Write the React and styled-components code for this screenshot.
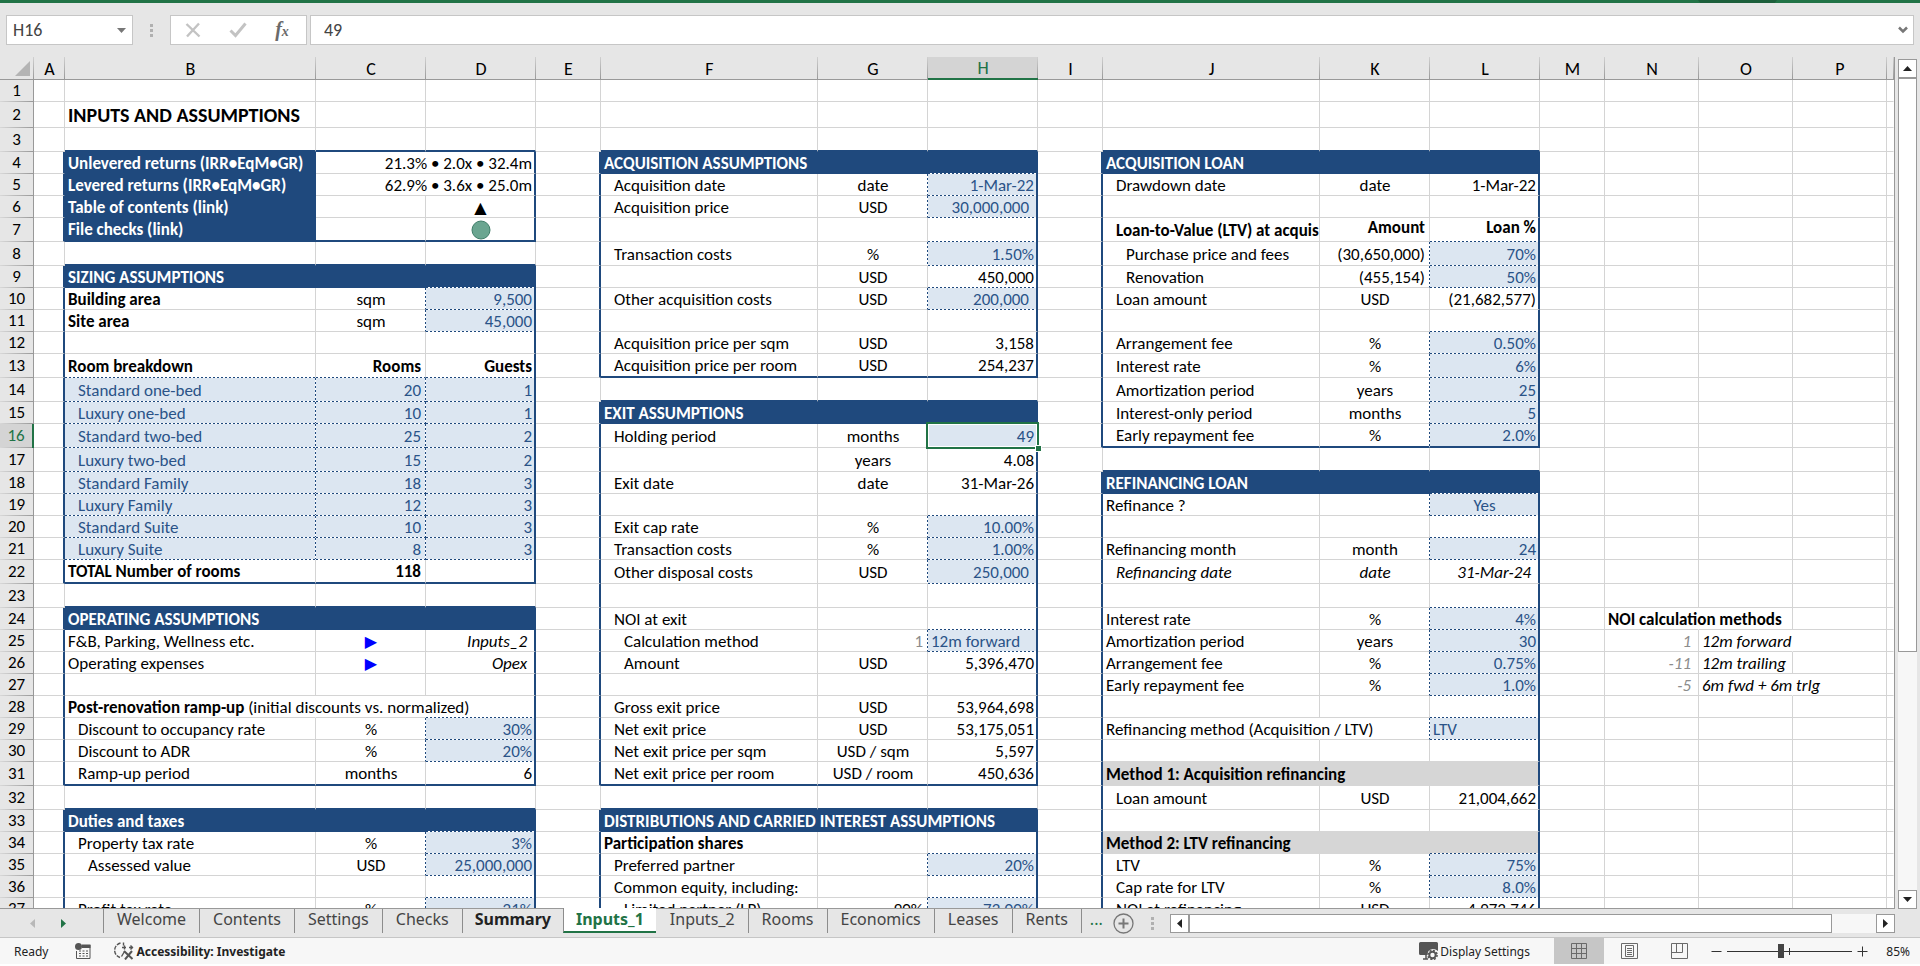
import React, { useState } from 'react'
import styled, { createGlobalStyle, css } from 'styled-components'

const NAVY = '#1f497d'
const GREEN = '#217346'
const GRID = '#d4d4d4'
const LINE = '#999'
const FILL = '#dce6f1'
const BAND = '#d6d6d6'
const CHROME = '#e6e6e6'

const GlobalStyle = createGlobalStyle`
  * {
    box-sizing: border-box;
  }
  body {
    margin: 0;
    background: white;
    font-family: Carlito, Calibri, Lato, sans-serif;
    font-size: 17px;
    color: black;
  }
  button,
  input {
    font: inherit;
    color: inherit;
    margin: 0;
    padding: 0;
    border: none;
    border-radius: 0;
    background: none;
    outline: none;
  }
`

/* ---------- sheet data ---------- */

const COLUMNS = [
  ['A', 31],
  ['B', 251],
  ['C', 110],
  ['D', 110],
  ['E', 65],
  ['F', 217],
  ['G', 110],
  ['H', 110],
  ['I', 65],
  ['J', 217],
  ['K', 110],
  ['L', 110],
  ['M', 65],
  ['N', 94],
  ['O', 94],
  ['P', 94],
  ['', null],
]

const TALL_ROWS = [3, 7, 8, 13, 14, 16, 17, 22, 23, 31, 32]
const ROW_COUNT = 37

// first column, first row, last column, last row
const PANELS = [
  ['B', 4, 'D', 7],
  ['B', 9, 'D', 22],
  ['B', 24, 'D', 31],
  ['B', 33, 'D', 40],
  ['F', 4, 'H', 13],
  ['F', 15, 'H', 31],
  ['F', 33, 'H', 40],
  ['J', 4, 'L', 16],
  ['J', 18, 'L', 40],
]

const BANDS = [31, 34]

const label = (text, indent = 0, more) => ({ text, indent, ...more })
const bold = (text, indent = 0) => ({ text, indent, bold: true })
const title = text => ({ text, bold: true })
const unit = text => ({ text, align: 'center' })
const num = (text, more) => ({ text, align: 'right', ...more })
const input = (text, more) => ({ text, align: 'right', input: true, ...more })

const CELLS = {
  B2: { text: 'INPUTS AND ASSUMPTIONS', bold: true, large: true },

  B4: title('Unlevered returns (IRR•EqM•GR)'),
  C4: num('21.3% • 2.0x • 32.4m', { span: 2 }),
  B5: title('Levered returns (IRR•EqM•GR)'),
  C5: num('62.9% • 3.6x • 25.0m', { span: 2 }),
  B6: title('Table of contents (link)'),
  D6: { align: 'center', mark: 'up' },
  B7: title('File checks (link)'),
  D7: { align: 'center', mark: 'ok' },

  B9: title('SIZING ASSUMPTIONS'),
  B10: bold('Building area'),
  C10: unit('sqm'),
  D10: input('9,500'),
  B11: bold('Site area'),
  C11: unit('sqm'),
  D11: input('45,000'),
  B13: bold('Room breakdown'),
  C13: num('Rooms', { bold: true }),
  D13: num('Guests', { bold: true }),
  B22: bold('TOTAL Number of rooms'),
  C22: num('118', { bold: true }),

  B24: title('OPERATING ASSUMPTIONS'),
  B25: label('F&B, Parking, Wellness etc.'),
  C25: { align: 'center', mark: 'next' },
  D25: num('Inputs_2', { italic: true, inset: true }),
  B26: label('Operating expenses'),
  C26: { align: 'center', mark: 'next' },
  D26: num('Opex', { italic: true, inset: true }),
  B28: {
    text: (
      <>
        <b>Post-renovation ramp-up</b> (initial discounts vs. normalized)
      </>
    ),
    spill: true,
  },
  C28: { spill: true },
  B29: label('Discount to occupancy rate', 1),
  C29: unit('%'),
  D29: input('30%'),
  B30: label('Discount to ADR', 1),
  C30: unit('%'),
  D30: input('20%'),
  B31: label('Ramp-up period', 1),
  C31: unit('months'),
  D31: num('6'),

  B33: title('Duties and taxes'),
  B34: label('Property tax rate', 1),
  C34: unit('%'),
  D34: input('3%'),
  B35: label('Assessed value', 2),
  C35: unit('USD'),
  D35: input('25,000,000'),
  B37: label('Profit tax rate', 1),
  C37: unit('%'),
  D37: input('21%'),

  F4: title('ACQUISITION ASSUMPTIONS'),
  F5: label('Acquisition date', 1),
  G5: unit('date'),
  H5: input('1-Mar-22'),
  F6: label('Acquisition price', 1),
  G6: unit('USD'),
  H6: input('30,000,000', { inset: true }),
  F8: label('Transaction costs', 1),
  G8: unit('%'),
  H8: input('1.50%'),
  G9: unit('USD'),
  H9: num('450,000'),
  F10: label('Other acquisition costs', 1),
  G10: unit('USD'),
  H10: input('200,000', { inset: true }),
  F12: label('Acquisition price per sqm', 1),
  G12: unit('USD'),
  H12: num('3,158'),
  F13: label('Acquisition price per room', 1),
  G13: unit('USD'),
  H13: num('254,237'),

  F15: title('EXIT ASSUMPTIONS'),
  F16: label('Holding period', 1),
  G16: unit('months'),
  H16: input('49', { selected: true }),
  G17: unit('years'),
  H17: num('4.08'),
  F18: label('Exit date', 1),
  G18: unit('date'),
  H18: num('31-Mar-26'),
  F20: label('Exit cap rate', 1),
  G20: unit('%'),
  H20: input('10.00%'),
  F21: label('Transaction costs', 1),
  G21: unit('%'),
  H21: input('1.00%'),
  F22: label('Other disposal costs', 1),
  G22: unit('USD'),
  H22: input('250,000', { inset: true }),
  F24: label('NOI at exit', 1),
  F25: label('Calculation method', 2),
  G25: num('1', { muted: true }),
  H25: input('12m forward', { align: 'left' }),
  F26: label('Amount', 2),
  G26: unit('USD'),
  H26: num('5,396,470'),
  F28: label('Gross exit price', 1),
  G28: unit('USD'),
  H28: num('53,964,698'),
  F29: label('Net exit price', 1),
  G29: unit('USD'),
  H29: num('53,175,051'),
  F30: label('Net exit price per sqm', 1),
  G30: unit('USD / sqm'),
  H30: num('5,597'),
  F31: label('Net exit price per room', 1),
  G31: unit('USD / room'),
  H31: num('450,636'),

  F33: title('DISTRIBUTIONS AND CARRIED INTEREST ASSUMPTIONS'),
  F34: bold('Participation shares'),
  F35: label('Preferred partner', 1),
  H35: input('20%'),
  F36: label('Common equity, including:', 1),
  F37: label('Limited partner (LP)', 2),
  G37: num('90%'),
  H37: input('72.00%'),

  J4: title('ACQUISITION LOAN'),
  J5: label('Drawdown date', 1),
  K5: unit('date'),
  L5: num('1-Mar-22'),
  J7: bold('Loan-to-Value (LTV) at acquis', 1),
  K7: num('Amount', { bold: true, top: true }),
  L7: num('Loan %', { bold: true, top: true }),
  J8: label('Purchase price and fees', 2),
  K8: num('(30,650,000)'),
  L8: input('70%'),
  J9: label('Renovation', 2),
  K9: num('(455,154)'),
  L9: input('50%'),
  J10: label('Loan amount', 1),
  K10: unit('USD'),
  L10: num('(21,682,577)'),
  J12: label('Arrangement fee', 1),
  K12: unit('%'),
  L12: input('0.50%'),
  J13: label('Interest rate', 1),
  K13: unit('%'),
  L13: input('6%'),
  J14: label('Amortization period', 1),
  K14: unit('years'),
  L14: input('25'),
  J15: label('Interest-only period', 1),
  K15: unit('months'),
  L15: input('5'),
  J16: label('Early repayment fee', 1),
  K16: unit('%'),
  L16: input('2.0%'),

  J18: title('REFINANCING LOAN'),
  J19: label('Refinance ?'),
  L19: input('Yes', { align: 'center' }),
  J21: label('Refinancing month'),
  K21: unit('month'),
  L21: input('24'),
  J22: label('Refinancing date', 1, { italic: true }),
  K22: { text: 'date', align: 'center', italic: true },
  L22: num('31-Mar-24', { italic: true, inset: true }),
  J24: label('Interest rate'),
  K24: unit('%'),
  L24: input('4%'),
  J25: label('Amortization period'),
  K25: unit('years'),
  L25: input('30'),
  J26: label('Arrangement fee'),
  K26: unit('%'),
  L26: input('0.75%'),
  J27: label('Early repayment fee'),
  K27: unit('%'),
  L27: input('1.0%'),
  J29: label('Refinancing method (Acquisition / LTV)', 0, { spill: true }),
  L29: input('LTV', { align: 'left' }),
  J31: bold('Method 1: Acquisition refinancing'),
  J32: label('Loan amount', 1),
  K32: unit('USD'),
  L32: num('21,004,662'),
  J34: bold('Method 2: LTV refinancing'),
  J35: label('LTV', 1),
  K35: unit('%'),
  L35: input('75%'),
  J36: label('Cap rate for LTV', 1),
  K36: unit('%'),
  L36: input('8.0%'),
  J37: label('NOI at refinancing', 1),
  K37: unit('USD'),
  L37: num('4,973,746'),

  N24: { text: 'NOI calculation methods', bold: true, spill: true },
  N25: num('1', { italic: true, muted: true, inset: true }),
  O25: label('12m forward', 0, { italic: true, spill: true }),
  N26: num('-11', { italic: true, muted: true, inset: true }),
  O26: label('12m trailing', 0, { italic: true }),
  N27: num('-5', { italic: true, muted: true, inset: true }),
  O27: label('6m fwd + 6m trlg', 0, { italic: true, spill: true }),
}

const ROOMS = [
  ['Standard one-bed', 20, 1],
  ['Luxury one-bed', 10, 1],
  ['Standard two-bed', 25, 2],
  ['Luxury two-bed', 15, 2],
  ['Standard Family', 18, 3],
  ['Luxury Family', 12, 3],
  ['Standard Suite', 10, 3],
  ['Luxury Suite', 8, 3],
]

ROOMS.forEach(([name, rooms, guests], i) => {
  CELLS[`B${14 + i}`] = input(name, { align: 'left', indent: 1 })
  CELLS[`C${14 + i}`] = input(rooms)
  CELLS[`D${14 + i}`] = input(guests)
})

const TABS = ['Welcome', 'Contents', 'Settings', 'Checks', 'Summary', 'Inputs_1', 'Inputs_2', 'Rooms', 'Economics', 'Leases', 'Rents']

/* ---------- border rules ---------- */

const letter = i => (COLUMNS[i] ? COLUMNS[i][0] : '')
const cellAt = (i, row) => CELLS[`${letter(i)}${row}`] || {}
const inPanel = (i, row) =>
  PANELS.find(([c0, r0, c1, r1]) => letter(i) && letter(i) >= c0 && letter(i) <= c1 && row >= r0 && row <= r1)

const background = (i, row) => {
  const panel = inPanel(i, row)
  if (!panel) return 'transparent'
  if (panel[1] === row && (row !== 4 || panel[0] !== 'B')) return NAVY
  if (panel[0] === 'B' && panel[1] === 4 && letter(i) === 'B') return NAVY
  if (panel[0] === 'J' && BANDS.includes(row)) return BAND
  if (cellAt(i, row).input) return FILL
  return 'transparent'
}

const edge = (i, row, j, nextRow) => {
  const here = inPanel(i, row)
  const there = inPanel(j, nextRow)
  const from = background(i, row)
  const to = background(j, nextRow)
  if (here !== there) return 'thick'
  if (cellAt(i, row).input || cellAt(j, nextRow).input) return 'dash'
  if (from === NAVY) return 'navy'
  if (from === BAND || to === BAND) return 'band'
  return 'grid'
}

/* ---------- sheet parts ---------- */

const Page = styled.div`
  height: 100vh;
  display: flex;
  flex-direction: column;
  overflow: hidden;
  background: ${CHROME};
`

const TitleStrip = styled.div`
  flex: none;
  height: 3px;
  padding-right: 143px;
  display: flex;
  justify-content: flex-end;
  background: ${GREEN};
`

const TitleShade = styled.div`
  width: 79px;
  background: #1c5f3b;
  clip-path: polygon(0 0, 100% 0, 97% 100%, 3% 100%);
`

const FormulaBar = styled.div`
  flex: none;
  display: flex;
  align-items: center;
  padding: 12px 6px;
  color: #444;
  font-size: 18px;
`

const BarBox = styled.div`
  display: flex;
  align-items: center;
  height: 30px;
  border: 1px solid #c6c6c6;
  background: white;
`

const NameBox = styled(BarBox)`
  width: 127px;
  padding: 0 6px;

  input {
    flex: 1;
    min-width: 0;
  }
`

const Grip = styled.div`
  width: 3px;
  height: 13px;
  margin: ${props => props.$margin};
  background: repeating-linear-gradient(#b0b0b0 0 3px, transparent 3px 5px);
`

const FormulaButtons = styled(BarBox)`
  width: 137px;
  padding: 0 8px 0 6px;
  justify-content: space-between;
`

const BarButton = styled.button`
  display: flex;
  align-items: center;
  justify-content: center;
  width: 32px;
  height: 24px;
`

const FormulaBox = styled(BarBox)`
  flex: 1;
  margin-left: 3px;
  padding: 0 5px 0 13px;

  input {
    flex: 1;
  }
`

const Main = styled.main`
  flex: 1;
  min-height: 0;
  display: flex;
`

const SheetView = styled.div`
  flex: 1;
  min-width: 0;
  overflow: hidden;
  border-bottom: 1px solid ${LINE};
`

const Sheet = styled.table`
  width: 100%;
  table-layout: fixed;
  border-collapse: separate;
  border-spacing: 0;
  background: white;
  border-right: 1px solid ${LINE};
  line-height: 20px;
`

const ColumnHead = styled.th`
  height: 23px;
  padding: 1px 0 0;
  font-size: 18px;
  font-weight: 400;
  background: linear-gradient(#d0d0d0, ${LINE}) right / 1px 100% no-repeat ${CHROME};
  border-bottom: 1px solid ${LINE};

  ${props =>
    props.$active &&
    css`
      color: ${GREEN};
      background-color: #d4d4d4;
      border-bottom: 2px solid ${GREEN};
    `}

  svg {
    display: block;
    margin-left: 15px;
  }
`

const RowHead = styled.th`
  padding: 0;
  font-weight: 400;
  text-align: center;
  background: linear-gradient(90deg, #d8d8d8, ${LINE}) bottom / 100% 1px no-repeat ${CHROME};
  border-right: 1px solid ${LINE};

  ${props =>
    props.$active &&
    css`
      color: ${GREEN};
      background-color: #d4d4d4;
      border-right: 2px solid ${GREEN};
    `}
`

const Row = styled.tr`
  height: ${props => props.$height}px;
`

const EDGE = {
  grid: `1px solid ${GRID}`,
  thick: `2px solid ${NAVY}`,
  navy: `1px solid ${NAVY}`,
  band: `1px solid ${BAND}`,
  dash: '1px solid transparent',
  none: '1px solid transparent',
}

const dashes = (right, bottom) => {
  const layers = []
  if (bottom === 'dash') layers.push(`repeating-linear-gradient(90deg, ${NAVY} 0 2px, white 2px 4px) bottom / 100% 1px no-repeat border-box`)
  if (right === 'dash') layers.push(`repeating-linear-gradient(${NAVY} 0 2px, white 2px 4px) right / 1px 100% no-repeat border-box`)
  return layers.map(layer => `${layer}, `).join('')
}

const rightPadding = props => {
  if (props.$inset) return 7
  return props.$right === 'thick' || props.$align === 'center' ? 2 : 4
}

const Cell = styled.td`
  padding: ${props => (props.$top ? 0 : 1)}px ${rightPadding}px 0 ${props => 3 + 10 * props.$indent}px;
  vertical-align: ${props => (props.$top ? 'top' : 'middle')};
  white-space: nowrap;
  line-height: 19px;
  text-align: ${props => props.$align || 'left'};
  font-weight: ${props => (props.$bold ? 700 : 400)};
  font-style: ${props => (props.$italic ? 'italic' : 'normal')};
  font-size: ${props => (props.$large ? 20 : 17)}px;
  color: ${props => props.$color};
  border-right: ${props => EDGE[props.$right]};
  border-bottom: ${props => EDGE[props.$bottom]};
  background: ${props => dashes(props.$right, props.$bottom)} linear-gradient(${props => props.$fill}, ${props => props.$fill}) border-box;

  ${props =>
    props.$selected &&
    css`
      position: relative;
    `}
`

const Selection = styled.span`
  position: absolute;
  top: -2px;
  right: -3px;
  bottom: -2px;
  left: -2px;
  border: 2px solid ${GREEN};
  box-shadow: inset 0 0 0 1px white;

  &::after {
    content: '';
    position: absolute;
    right: -4px;
    bottom: -4px;
    width: 5px;
    height: 5px;
    background: ${GREEN};
    box-shadow: 0 0 0 1px white;
  }
`

const MarkLink = styled.a`
  display: block;
  font-family: 'DejaVu Sans', sans-serif;
  font-size: 16px;
  text-decoration: none;
  color: ${props => (props.$blue ? '#00f' : 'black')};

  svg {
    display: block;
    margin: 0 auto;
  }
`

/* ---------- scroll bars ---------- */

const VerticalScroll = styled.div`
  flex: none;
  display: flex;
  flex-direction: column;
  width: 19px;
  margin: 2px 3px 0;
  background: #f7f7f7;
`

const HorizontalScroll = styled.div`
  flex: 1;
  display: flex;
  height: 19px;
  margin-right: 25px;
  background: #f7f7f7;
`

const ScrollButton = styled.button`
  flex: none;
  display: flex;
  align-items: center;
  justify-content: center;
  width: 19px;
  height: 19px;
  border: 1px solid ${LINE};
  background: white;
`

const Thumb = styled.div`
  flex: ${props => props.$share};
  border: 1px solid ${LINE};
  background: white;
`

const Rest = styled.div`
  flex: ${props => props.$share};
`

/* ---------- tabs and status ---------- */

const TabBar = styled.nav`
  flex: none;
  display: flex;
  height: 29px;
  border-bottom: 1px solid #c6c6c6;
  font-family: 'Noto Sans', 'Open Sans', sans-serif;
  font-size: 16px;
  color: #444;
`

const TabArrows = styled.div`
  display: flex;
  align-items: center;
  gap: 22px;
  width: 103px;
  padding-left: 28px;

  button {
    display: flex;
  }
`

const Tab = styled.button`
  height: 24px;
  padding: 0 13px 4px;
  border-left: 1px solid ${props => (props.$plain ? 'transparent' : '#8c8c8c')};
  line-height: 20px;
  color: #444;

  ${props =>
    props.$strong &&
    css`
      padding: 0 12px 4px;
      font-weight: 700;
      color: #222;
    `}

  ${props =>
    props.$active &&
    css`
      height: 25px;
      margin-top: -1px;
      padding: 1px 12px 2px;
      font-weight: 700;
      color: ${GREEN};
      background: white;
      border-bottom: 2px solid ${GREEN};
    `}
`

const MoreTabs = styled.button`
  height: 24px;
  padding: 0 10px 4px 8px;
  border-left: 1px solid #8c8c8c;
  line-height: 20px;
  color: ${GREEN};
`

const TabTools = styled.div`
  flex: 1;
  display: flex;
  align-items: center;
`

const AddSheet = styled.button`
  display: flex;
`

const StatusBar = styled.footer`
  flex: none;
  display: flex;
  align-items: center;
  height: 26px;
  margin-bottom: 2px;
  padding: 0 10px 0 14px;
  background: #f7f7f7;
  box-shadow: 0 2px 0 white;
  font-family: 'Noto Sans', 'Open Sans', sans-serif;
  font-size: 12px;
  color: #222;
`

const StatusButton = styled.button`
  display: flex;
  align-items: center;
  gap: 2px;
  margin-left: ${props => props.$gap || 0}px;
  font-weight: ${props => (props.$strong ? 700 : 400)};
`

const Spacer = styled.div`
  flex: 1;
`

const ViewButtons = styled.div`
  display: flex;
  margin: 0 2px 0 24px;
`

const ViewButton = styled.button`
  display: flex;
  align-items: center;
  justify-content: center;
  width: 50px;
  height: 26px;
  background: ${props => (props.$active ? '#c6c6c6' : 'none')};
`

const ZoomButton = styled.button`
  display: flex;
  margin: 0 5px;
`

const ZoomSlider = styled.input`
  appearance: none;
  width: 125px;
  height: 14px;
  background:
    linear-gradient(#333, #333) center / 1px 7px no-repeat,
    linear-gradient(#333, #333) center / 100% 1px no-repeat;

  &::-webkit-slider-thumb {
    appearance: none;
    width: 6px;
    height: 14px;
    background: #444;
  }
`

const ZoomLevel = styled.output`
  width: 37px;
  text-align: right;
`

/* ---------- icons ---------- */

const Arrow = ({ dir, color = '#222', size = 9 }) => {
  const shapes = {
    up: 'M0 7 4.5 2 9 7z',
    down: 'M0 2 4.5 7 9 2z',
    left: 'M7 0 2 4.5 7 9z',
    right: 'M2 0 7 4.5 2 9z',
  }
  return (
    <svg width={size} height={size} viewBox="0 0 9 9">
      <path d={shapes[dir]} fill={color} />
    </svg>
  )
}

const CancelIcon = () => (
  <svg width="16" height="16" viewBox="0 0 16 16">
    <path d="M1.5 2 14.5 14.5M14 1.5 2 14.5" stroke="#c3c3c3" strokeWidth="2.4" fill="none" />
  </svg>
)

const EnterIcon = () => (
  <svg width="18" height="16" viewBox="0 0 18 16">
    <path d="M1.5 8.5 6.5 13.5 16.5 1.5" stroke="#c3c3c3" strokeWidth="3" fill="none" />
  </svg>
)

const FxLabel = styled.span`
  font-family: 'Liberation Serif', serif;
  font-style: italic;
  font-weight: 700;
  font-size: 20px;
  line-height: 20px;
  color: #6a6a6a;

  small {
    font-size: 14px;
  }
`

const RecordIcon = () => (
  <svg width="16" height="16" viewBox="0 0 16 16">
    <path d="M1.5 8v7.5h13.5V2" fill="none" stroke="#555" />
    <path d="M7 1.5h8.5V5H7z" fill="#555" />
    <circle cx="3.5" cy="3.5" r="3.5" fill="#555" />
    <path d="M4 8h10M4 10.5h10M4 13h10" stroke="#555" strokeDasharray="2 1.5" />
  </svg>
)

const AccessibilityIcon = () => (
  <svg width="20" height="18" viewBox="0 0 20 18" fill="none" stroke="#555" strokeWidth="1.4">
    <path d="M6.5 1A7.5 7.5 0 0 0 6 15.5" strokeDasharray="4 1.2" />
    <path d="M8 5.5h4M15 5.5h4M10.5 3.5v4M16.5 3.5l2 2-2 2M9.5.5v3" />
    <path d="M7.5 14.5 10.5 9.5" />
    <path d="M10 9l8.5 8M18 9l-7 8.5" strokeWidth="2" />
  </svg>
)

const DisplayIcon = () => (
  <svg width="19" height="18" viewBox="0 0 19 18">
    <path d="M0 1.5Q0 0 1.5 0h16Q19 0 19 1.5V9Q14 5 9.5 9L8 13H1.5Q0 13 0 11.5z" fill="#555" />
    <path d="M4 17h5M7 13v4" stroke="#555" strokeWidth="1.5" />
    <circle cx="13.5" cy="13" r="3.2" fill="none" stroke="#555" strokeWidth="2" />
    <circle cx="13.5" cy="13" r="4.6" fill="none" stroke="#555" strokeWidth="1.5" strokeDasharray="2 1.6" />
  </svg>
)

const GridIcon = () => (
  <svg width="16" height="16" viewBox="0 0 16 16" fill="none" stroke="#6a6a6a">
    <path d="M.5.5h15v15H.5zM.5 5.5h15M.5 10.5h15M5.5.5v15M10.5.5v15" />
  </svg>
)

const PageIcon = () => (
  <svg width="17" height="16" viewBox="0 0 17 16" fill="none" stroke="#6a6a6a">
    <path d="M.5.5h16v15H.5zM4.5 2.5h8v11h-8zM6 5.5h5M6 7.5h5M6 9.5h5M6 11.5h5" />
  </svg>
)

const BreakIcon = () => (
  <svg width="17" height="16" viewBox="0 0 17 16" fill="none" stroke="#6a6a6a">
    <path d="M.5.5h16v15H.5zM5.5.5v9M11.5.5v9H.5" />
  </svg>
)

const marks = {
  up: (
    <MarkLink href="#contents" aria-label="Table of contents">
      ▲
    </MarkLink>
  ),
  next: (
    <MarkLink href="#sheet" aria-label="Open sheet" $blue>
      ▶
    </MarkLink>
  ),
  ok: (
    <MarkLink href="#checks" aria-label="File checks">
      <svg width="20" height="20" viewBox="0 0 20 20">
        <circle cx="10" cy="10" r="9" fill="#6aa590" stroke="#3f7d68" />
      </svg>
    </MarkLink>
  ),
}

const SheetCell = ({ index, row }) => {
  const cell = cellAt(index, row)
  const last = index + (cell.span || 1) - 1
  const fill = background(index, row)
  let right = edge(last, row, last + 1, row)
  if (cell.spill && right === 'grid') right = 'none'
  if (index === COLUMNS.length - 1) right = 'none'
  const bottom = edge(index, row, index, row + 1)

  let color = 'black'
  if (cell.input) color = '#2a5388'
  if (cell.muted) color = '#8c8c8c'
  if (fill === NAVY) color = 'white'

  return (
    <Cell
      colSpan={cell.span}
      $align={cell.align}
      $indent={cell.indent || 0}
      $bold={cell.bold}
      $italic={cell.italic}
      $large={cell.large}
      $inset={cell.inset}
      $top={cell.top}
      $selected={cell.selected}
      $color={color}
      $fill={fill}
      $right={right}
      $bottom={bottom}
    >
      {cell.text}
      {cell.mark && marks[cell.mark]}
      {cell.selected && <Selection />}
    </Cell>
  )
}

const rowHeight = row => {
  if (row === 2) return 26
  return TALL_ROWS.includes(row) ? 24 : 22
}

const Spreadsheet = () => (
  <Sheet>
    <colgroup>
      <col width="34" />
      {COLUMNS.map(([name, width]) => (
        <col key={name} width={width || undefined} />
      ))}
    </colgroup>
    <thead>
      <tr>
        <ColumnHead aria-label="Select all">
          <svg width="15" height="15" viewBox="0 0 15 15">
            <path d="M15 0v15H0z" fill="#b4b4b4" />
          </svg>
        </ColumnHead>
        {COLUMNS.map(([name]) => (
          <ColumnHead key={name} $active={name === 'H'}>
            {name}
          </ColumnHead>
        ))}
      </tr>
    </thead>
    <tbody>
      {Array.from({ length: ROW_COUNT }, (_, i) => i + 1).map(row => (
        <Row key={row} $height={rowHeight(row)}>
          <RowHead scope="row" $active={row === 16}>
            {row}
          </RowHead>
          {COLUMNS.map(([name], index) =>
            index > 0 && cellAt(index - 1, row).span ? null : <SheetCell key={name} index={index} row={row} />
          )}
        </Row>
      ))}
    </tbody>
  </Sheet>
)

export default function App() {
  const [formula, setFormula] = useState('49')
  const [active, setActive] = useState('Inputs_1')

  return (
    <Page>
      <GlobalStyle />
      <TitleStrip>
        <TitleShade />
      </TitleStrip>
      <FormulaBar>
        <NameBox>
          <input aria-label="Name box" defaultValue="H16" />
          <Arrow dir="down" color="#777" />
        </NameBox>
        <Grip $margin="0 17px" />
        <FormulaButtons>
          <BarButton aria-label="Cancel">
            <CancelIcon />
          </BarButton>
          <BarButton aria-label="Enter">
            <EnterIcon />
          </BarButton>
          <BarButton aria-label="Insert function">
            <FxLabel>
              f<small>x</small>
            </FxLabel>
          </BarButton>
        </FormulaButtons>
        <FormulaBox>
          <input aria-label="Formula bar" value={formula} onChange={e => setFormula(e.target.value)} />
          <svg width="10" height="8" viewBox="0 0 10 8">
            <path d="M1 1.5 5 5.5 9 1.5" fill="none" stroke="#777" strokeWidth="2.5" />
          </svg>
        </FormulaBox>
      </FormulaBar>

      <Main>
        <SheetView>
          <Spreadsheet />
        </SheetView>
        <VerticalScroll>
          <ScrollButton aria-label="Scroll up">
            <Arrow dir="up" />
          </ScrollButton>
          <Thumb $share={573} />
          <Rest $share={239} />
          <ScrollButton aria-label="Scroll down">
            <Arrow dir="down" />
          </ScrollButton>
        </VerticalScroll>
      </Main>

      <TabBar>
        <TabArrows>
          <button aria-label="Previous sheets">
            <Arrow dir="left" color="#b8b8b8" />
          </button>
          <button aria-label="Next sheets">
            <Arrow dir="right" color={GREEN} />
          </button>
        </TabArrows>
        {TABS.map((name, i) => (
          <Tab
            key={name}
            $active={name === active}
            $strong={name === 'Summary'}
            $plain={i > 0 && TABS[i - 1] === active}
            onClick={() => setActive(name)}
          >
            {name}
          </Tab>
        ))}
        <MoreTabs aria-label="More sheets">...</MoreTabs>
        <TabTools>
          <AddSheet aria-label="New sheet">
            <svg width="21" height="21" viewBox="0 0 21 21" fill="none" stroke="#777">
              <circle cx="10.5" cy="10.5" r="9.5" strokeWidth="1.3" />
              <path d="M10.5 5.5v10M5.5 10.5h10" strokeWidth="2" />
            </svg>
          </AddSheet>
          <Grip $margin="0 16px 0 17px" />
          <HorizontalScroll>
            <ScrollButton aria-label="Scroll left">
              <Arrow dir="left" />
            </ScrollButton>
            <Thumb $share={646} />
            <Rest $share={44} />
            <ScrollButton aria-label="Scroll right">
              <Arrow dir="right" />
            </ScrollButton>
          </HorizontalScroll>
        </TabTools>
      </TabBar>

      <StatusBar>
        Ready
        <StatusButton $gap={27} aria-label="Record macro">
          <RecordIcon />
        </StatusButton>
        <StatusButton $gap={23} $strong>
          <AccessibilityIcon />
          Accessibility: Investigate
        </StatusButton>
        <Spacer />
        <StatusButton>
          <DisplayIcon />
          Display Settings
        </StatusButton>
        <ViewButtons>
          <ViewButton $active aria-label="Normal view">
            <GridIcon />
          </ViewButton>
          <ViewButton aria-label="Page layout">
            <PageIcon />
          </ViewButton>
          <ViewButton aria-label="Page break preview">
            <BreakIcon />
          </ViewButton>
        </ViewButtons>
        <ZoomButton aria-label="Zoom out">
          <svg width="11" height="11" viewBox="0 0 11 11">
            <path d="M.5 5.5h10" stroke="#333" />
          </svg>
        </ZoomButton>
        <ZoomSlider type="range" aria-label="Zoom" min="0" max="100" defaultValue="43" />
        <ZoomButton aria-label="Zoom in">
          <svg width="11" height="11" viewBox="0 0 11 11">
            <path d="M.5 5.5h10M5.5.5v10" stroke="#333" />
          </svg>
        </ZoomButton>
        <ZoomLevel>85%</ZoomLevel>
      </StatusBar>
    </Page>
  )
}
